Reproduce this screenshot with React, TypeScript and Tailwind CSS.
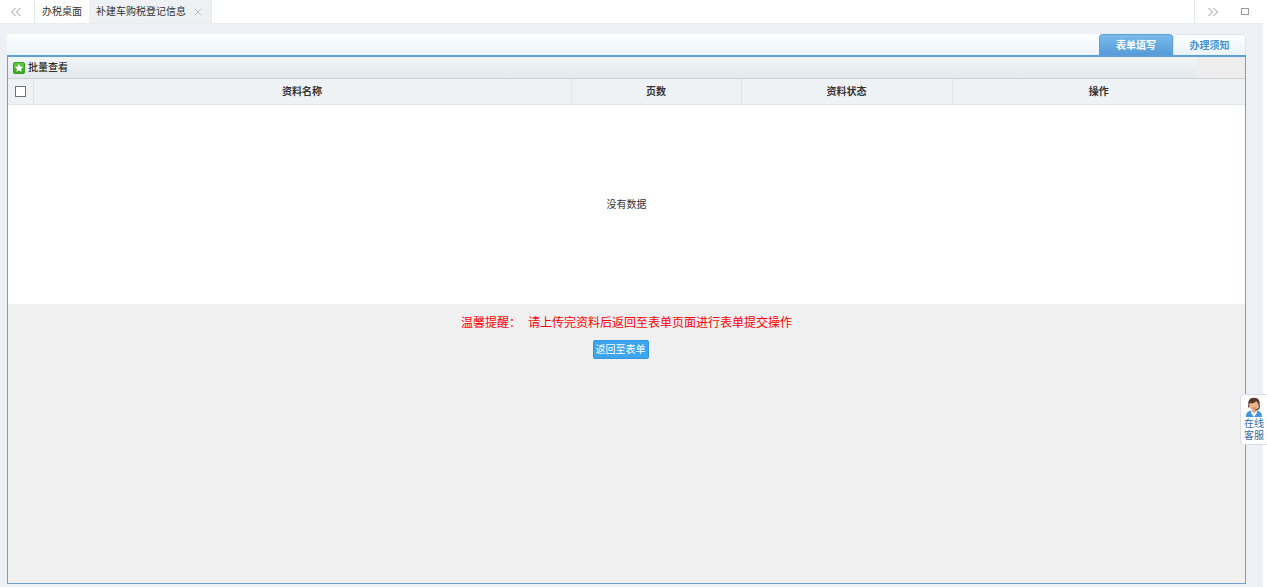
import { X } from "lucide-react";

function DoubleChevron({ className }: { className?: string }) {
  return (
    <svg width="12" height="10" viewBox="0 0 12 10" fill="none" stroke="currentColor" className={className} aria-hidden="true">
      <path d="M1.500 1 5.500 5 1.500 9M6.500 1 10.500 5 6.500 9" />
    </svg>
  );
}

function TopBar() {
  return (
    <header className="flex h-6 shrink-0 border-b border-[#e9edf0] bg-white text-[10px] text-[#333]">
      <button aria-label="向左滚动" className="flex w-[34px] items-center justify-center pr-0.5 text-[#999]">
        <DoubleChevron className="rotate-180" />
      </button>
      <nav className="flex flex-1">
        <a href="#desktop" className="flex items-center border-l border-[#e4e8eb] px-[7px]">
          办税桌面
        </a>
        <div className="flex items-center gap-1.5 border-r border-[#e4e8eb] bg-[#edf1f4] px-[7px]">
          <a href="#register">补建车购税登记信息</a>
          <button aria-label="关闭" className="text-[#888]">
            <X size={12} strokeWidth={1} />
          </button>
        </div>
      </nav>
      <div className="flex w-[69px] items-center justify-between border-l border-[#e4e8eb] pr-3.5 pl-3 text-[#999]">
        <button aria-label="向右滚动">
          <DoubleChevron />
        </button>
        <button aria-label="最大化">
          <svg width="8" height="7" viewBox="0 0 8 7" fill="none" stroke="currentColor" aria-hidden="true">
            <rect x="0.5" y="0.5" width="7" height="6" />
          </svg>
        </button>
      </div>
    </header>
  );
}

function FormTabs() {
  return (
    <div className="flex h-[23px] shrink-0 justify-end border-b-2 border-[#5f9fd3] bg-linear-to-b from-white to-[#eaf4fc] text-[10px] font-bold">
      <button className="w-[74px] rounded-t-sm border border-b-0 border-[#5c9fd8] bg-linear-to-b from-[#7cbbe9] to-[#559bd9] text-white">
        表单填写
      </button>
      <button className="w-[73px] rounded-t-sm border border-b-0 border-[#dfe5ea] bg-linear-to-b from-white to-[#e9f3fb] text-[#4a8fce]">
        办理须知
      </button>
    </div>
  );
}

function StarIcon() {
  return (
    <svg width="12" height="12" viewBox="0 0 12 12" aria-hidden="true">
      <defs>
        <linearGradient id="star-bg" x1="0" y1="0" x2="0" y2="1">
          <stop offset="0" stopColor="#62c944" />
          <stop offset="1" stopColor="#35a31d" />
        </linearGradient>
      </defs>
      <rect x="0.5" y="0.5" width="11" height="11" rx="1.5" fill="url(#star-bg)" stroke="#379f22" />
      <path
        d="M6 1.8 7.3 4.4 10.2 4.8 8.1 6.9 8.6 9.8 6 8.5 3.4 9.8 3.9 6.9 1.8 4.8 4.7 4.4Z"
        fill="#fff"
      />
    </svg>
  );
}

function Toolbar() {
  return (
    <div className="flex h-[22px] shrink-0 border-b border-[#ccd3d7] bg-[#ededed]">
      <div className="flex flex-1 items-center bg-linear-to-b from-[#f1f5f7] to-[#e3e9ec] pl-[5px]">
        <button className="flex items-center gap-[3px] text-[10px] text-black">
          <StarIcon />
          批量查看
        </button>
      </div>
      <div className="w-12" />
    </div>
  );
}

function MaterialTable() {
  return (
    <table className="w-full table-fixed border-collapse text-[10px] text-[#333]">
      <colgroup>
        <col className="w-[25px]" />
        <col />
        <col className="w-[170px]" />
        <col className="w-[211px]" />
        <col className="w-[293px]" />
      </colgroup>
      <thead>
        <tr className="h-[25px] border-b border-[#e1e5e8] bg-[#eef2f5]">
          <th className="border-r border-[#e1e5e8] p-0">
            <input
              type="checkbox"
              aria-label="全选"
              className="mx-auto block size-[11px] appearance-none border border-[#707070] bg-white checked:bg-[#3da5ec]"
            />
          </th>
          <th className="border-r border-[#e1e5e8] p-0">资料名称</th>
          <th className="border-r border-[#e1e5e8] p-0">页数</th>
          <th className="border-r border-[#e1e5e8] p-0">资料状态</th>
          <th className="p-0">操作</th>
        </tr>
      </thead>
      <tbody>
        <tr>
          <td colSpan={5} className="h-[200px] bg-white p-0 text-center">
            没有数据
          </td>
        </tr>
      </tbody>
    </table>
  );
}

function AgentIcon() {
  return (
    <svg width="18" height="20" viewBox="0 0 18 20" aria-hidden="true">
      <path d="M1 20c0-4 2-6 5-6.500l3 2.500 3-2.500c3 .5 5 2.500 5 6.500z" fill="#3f94dc" />
      <path d="M6.500 13.500h5l.5 2.500-3 4-3-4z" fill="#fff" />
      <path d="M7 12h4v2.500L9 16.500l-2-2z" fill="#e9a877" />
      <ellipse cx="9" cy="8" rx="4.600" ry="5.600" fill="#f0b186" />
      <path d="M3.500 8.500C2.500 3.500 5 .8 9 .8s6.600 2.700 5.500 7.700l-1.200-.7c-.2-2-1-3-2.300-3.600C9.500 6 7 6.500 5 6.300z" fill="#56382c" />
      <path d="M3.800 8v2.500M14.200 8v2c0 2-1.700 2.800-4 2.800" fill="none" stroke="#444" strokeWidth="1.300" />
      <path d="M7.500 10.800q1.500 1 3 0" fill="none" stroke="#b9583f" strokeWidth="0.800" />
    </svg>
  );
}

function OnlineService() {
  return (
    <a
      href="#service"
      className="fixed top-[394px] right-0 flex w-[27px] flex-col items-center rounded-l-sm border border-r-0 border-[#dcdfe2] bg-white pt-0.5 pb-0.5 text-[10px] leading-3 text-[#2c6cae]"
    >
      <AgentIcon />
      <span className="pt-px">在线</span>
      <span>客服</span>
    </a>
  );
}

export default function App() {
  return (
    <div className="flex min-h-screen flex-col bg-white pr-1 font-['Liberation_Sans','Noto_Sans_CJK_SC',sans-serif]">
      <TopBar />
      <main className="flex flex-1 flex-col bg-[#edf1f5] pt-2.5 pr-[17px] pb-[3px] pl-[7px]">
        <FormTabs />
        <section className="flex flex-1 flex-col border border-t-0 border-[#6fa3cf] bg-[#f0f0f0]">
          <Toolbar />
          <MaterialTable />
          <div className="flex flex-col items-center pt-[11px]">
            <p className="flex gap-[7px] text-[12px] leading-4 text-[#f00]">
              <span>温馨提醒：</span>
              <span>请上传完资料后返回至表单页面进行表单提交操作</span>
            </p>
            <button className="mt-[9px] mr-3 h-[19px] rounded-xs border border-[#3398e0] bg-[#3da5ee] px-0.5 text-[10px] leading-4 text-white">
              返回至表单
            </button>
          </div>
        </section>
      </main>
      <OnlineService />
    </div>
  );
}
